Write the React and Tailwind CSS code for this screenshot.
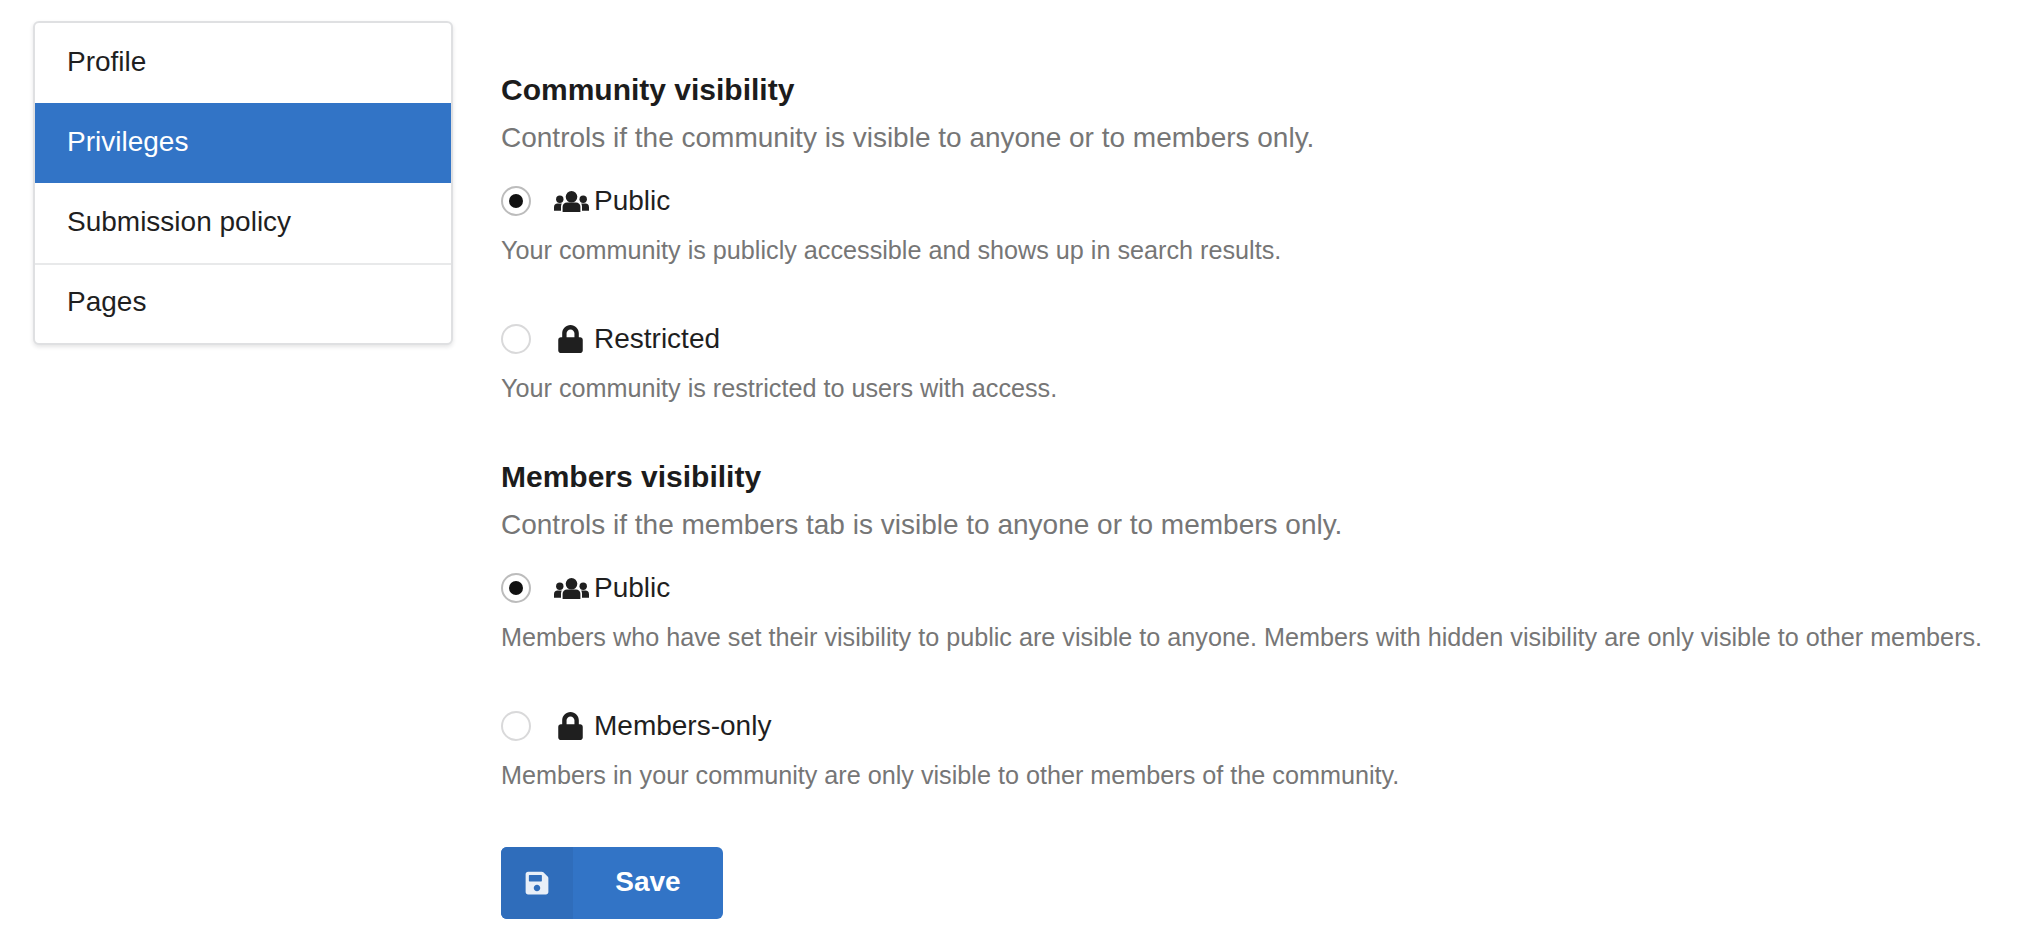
import React from "react";
import { FaLock, FaSave } from "react-icons/fa";

const menuItems = ["Profile", "Privileges", "Submission policy", "Pages"];

const UsersIcon = () => (
    <svg viewBox="0 0 35 21" className="w-[35px] h-[21px] fill-current">
        <circle cx="17.5" cy="5.8" r="5.8" />
        <circle cx="5.8" cy="8.2" r="3.7" />
        <circle cx="29.2" cy="8.2" r="3.7" />
        <path d="M8.6 21v-5.2c0-2.8 2-4.4 4.4-4.4h9c2.4 0 4.4 1.6 4.4 4.4V21z" />
        <path d="M0 19.8v-3.6c0-2.2 1.4-3.6 3.4-3.6h4.4c-.5.9-.8 1.9-.8 3v4.2z" />
        <path d="M35 19.8v-3.6c0-2.2-1.4-3.6-3.4-3.6h-4.4c.5.9.8 1.9.8 3v4.2z" />
    </svg>
);

const RadioOption = ({ checked, icon, label, description }) => (
    <div>
        <div className="flex items-center h-[32px]">
            <span
                className={`flex items-center justify-center w-[30px] h-[30px] rounded-full border-2 shrink-0 ${
                    checked ? "border-[#bcbcbc]" : "border-[#d9d9da]"
                }`}
            >
                {checked && <span className="w-[14px] h-[14px] rounded-full bg-[#111111]" />}
            </span>
            <span className="flex justify-center w-[36px] ml-[22px] text-[#1f1f1f]">{icon}</span>
            <span className="ml-[5px] text-[28px] text-[#1f1f1f]">{label}</span>
        </div>
        <p className="mt-[18px] text-[25.2px] leading-[30px] text-[#767676] whitespace-nowrap">{description}</p>
    </div>
);

const Section = ({ title, subtitle, options }) => (
    <section>
        <h2 className="text-[30px] leading-[36px] font-bold text-[#1c1c1c]">{title}</h2>
        <p className="mt-[12px] text-[28px] leading-[36px] text-[#767676] whitespace-nowrap">{subtitle}</p>
        <div className="mt-[29px] flex flex-col gap-[58px]">
            {options.map((option) => (
                <RadioOption key={option.label} {...option} />
            ))}
        </div>
    </section>
);

const App = () => {
    const publicIcon = <UsersIcon />;
    const lockIcon = <FaLock className="w-[25px] h-[28px] mr-[2px]" />;

    return (
        <div className="flex items-start w-[2018px] h-[940px] bg-white overflow-hidden font-['Liberation_Sans',sans-serif]">
            <nav className="w-[420px] mt-[21px] ml-[33px] shrink-0 bg-white border-2 border-[#dfe0e2] rounded-[6px] shadow-[0_2px_4px_rgba(34,36,38,0.12)] overflow-hidden">
                {menuItems.map((item, i) => (
                    <div
                        key={item}
                        className={`flex items-center h-[80px] pl-[32px] text-[28px] ${
                            item === "Privileges" ? "bg-[#3274c6] text-white" : "text-[#1f1f1f]"
                        } ${i === 3 ? "pb-[5px] border-t-2 border-[#e8e9ea]" : "pb-[3px]"}`}
                    >
                        {item}
                    </div>
                ))}
            </nav>

            <main className="ml-[48px] pt-[72px]">
                <Section
                    title="Community visibility"
                    subtitle="Controls if the community is visible to anyone or to members only."
                    options={[
                        {
                            checked: true,
                            icon: publicIcon,
                            label: "Public",
                            description: "Your community is publicly accessible and shows up in search results.",
                        },
                        {
                            checked: false,
                            icon: lockIcon,
                            label: "Restricted",
                            description: "Your community is restricted to users with access.",
                        },
                    ]}
                />
                <div className="mt-[56px]">
                    <Section
                        title="Members visibility"
                        subtitle="Controls if the members tab is visible to anyone or to members only."
                        options={[
                            {
                                checked: true,
                                icon: publicIcon,
                                label: "Public",
                                description:
                                    "Members who have set their visibility to public are visible to anyone. Members with hidden visibility are only visible to other members.",
                            },
                            {
                                checked: false,
                                icon: lockIcon,
                                label: "Members-only",
                                description: "Members in your community are only visible to other members of the community.",
                            },
                        ]}
                    />
                </div>
                <button className="flex items-stretch mt-[57px] w-[222px] h-[72px] rounded-[6px] overflow-hidden bg-[#3274c6] text-white text-[28px] font-bold">
                    <span className="flex items-center justify-center w-[72px] bg-[#2f6dbb]">
                        <FaSave className="w-[26px] h-[26px] text-[#e8eff8]" />
                    </span>
                    <span className="flex-1 flex items-center justify-center pb-[2px]">Save</span>
                </button>
            </main>
        </div>
    );
};

export default App;
